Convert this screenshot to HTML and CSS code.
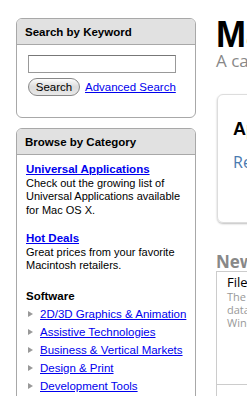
FILE: index.html
```html
<!DOCTYPE html>
<html lang="en">
<head>
    <meta charset="UTF-8">
    <meta name="viewport" content="width=device-width, initial-scale=1.0">
    <title>Macintosh Products Guide</title>
    <link rel="stylesheet" href="styles.css">
</head>
<body>
    <div id="page">
        <div id="sidebar">
            <div class="box">
                <div class="box-title">Search by Keyword</div>
                <div class="box-body search-body">
                    <input type="text" class="search-field">
                    <div class="search-row">
                        <button class="search-btn">Search</button>
                        <a href="#" class="adv-link">Advanced Search</a>
                    </div>
                </div>
            </div>

            <div class="box">
                <div class="box-title">Browse by Category</div>
                <div class="box-body cat-body">
                    <p class="feature">
                        <a href="#" class="feature-link">Universal Applications</a><br>
                        Check out the growing list of Universal Applications available for Mac OS X.
                    </p>
                    <p class="feature last">
                        <a href="#" class="feature-link">Hot Deals</a><br>
                        Great prices from your favorite Macintosh retailers.
                    </p>
                    <h4 class="cat-head">Software</h4>
                    <ul class="cat-list">
                        <li><a href="#">2D/3D Graphics &amp; Animation</a></li>
                        <li><a href="#">Assistive Technologies</a></li>
                        <li><a href="#">Business &amp; Vertical Markets</a></li>
                        <li><a href="#">Design &amp; Print</a></li>
                        <li><a href="#">Development Tools</a></li>
                        <li><a href="#">Education</a></li>
                    </ul>
                </div>
            </div>
        </div>

        <div id="main">
            <h1 class="page-title">Macintosh Products Guide</h1>
            <p class="page-sub">A catalog of hardware and software for the Mac</p>

            <div class="promo">
                <h2 class="promo-title">Apple Pro Applications</h2>
                <a href="#" class="promo-link">Read more about the pro apps</a>
            </div>

            <h3 class="news-head">New and Updated</h3>
            <div class="news-box">
                <div class="news-item">
                    <div class="news-title">FileMaker Pro 8.5</div>
                    <div class="news-text">The easiest way to<br>databases on Mac and<br>Windows networks.</div>
                </div>
                <div class="news-item"></div>
            </div>
        </div>
    </div>
</body>
</html>
```

FILE: styles.css
```css
html {
    overflow: hidden;
}
body {
    margin: 0;
    background-color: white;
    font-family: "Liberation Sans", Arial, sans-serif;
    font-size: 11px;
    color: #000;
}
#page {
    display: flex;
    gap: 20px;
    padding: 18px 0 0 16px;
}
#sidebar {
    width: 180px;
    flex-shrink: 0;
    display: flex;
    flex-direction: column;
    gap: 10px;
}
.box {
    border: 1px solid #a8a8a8;
    border-radius: 6px;
    overflow: hidden;
}
.box-title {
    background-color: #e1e1e1;
    border-bottom: 1px solid #a8a8a8;
    height: 25px;
    line-height: 26px;
    padding-left: 8px;
    font-weight: bold;
    font-size: 11.5px;
}
.box-body {
    padding: 10px 11px;
}
.search-body {
    height: 52px;
}
.search-field {
    display: block;
    box-sizing: border-box;
    width: 148px;
    height: 18px;
    margin: 0;
    border: 1px solid #999;
    border-top-color: #777;
    padding: 0 3px;
}
.search-row {
    display: flex;
    align-items: center;
    gap: 5px;
    margin-top: 5px;
}
.search-btn {
    box-sizing: border-box;
    width: 52px;
    height: 18px;
    padding: 0;
    border: 1px solid #888;
    border-radius: 9px;
    background: linear-gradient(#fdfdfd, #dcdcdc 50%, #e8e8e8);
    font-family: "Liberation Sans", Arial, sans-serif;
    font-size: 11.5px;
    color: #000;
}
a {
    color: #0000ee;
}
.adv-link {
    font-size: 11.5px;
}
.cat-body {
    padding: 8px 4px 10px 9px;
    line-height: 13.5px;
}
.feature {
    margin: 0 0 15px 0;
}
.feature.last {
    margin-bottom: 17px;
}
.feature-link {
    font-weight: bold;
    font-size: 11.5px;
}
.cat-head {
    margin: 0;
    font-size: 11.5px;
    line-height: 13px;
}
.cat-list {
    list-style: none;
    margin: 2px 0 0 0;
    padding: 0;
}
.cat-list li {
    position: relative;
    height: 18px;
    line-height: 18px;
    padding-left: 14px;
    white-space: nowrap;
    font-size: 11.5px;
}
.cat-list li::before {
    content: "";
    position: absolute;
    left: 2px;
    top: 6px;
    border-left: 5px solid #999;
    border-top: 3px solid transparent;
    border-bottom: 3px solid transparent;
}
#main {
    width: 500px;
    flex-shrink: 0;
    font-family: "Open Sans", "Liberation Sans", sans-serif;
    white-space: nowrap;
}
.page-title {
    margin: 0;
    font-family: "Liberation Sans", Arial, sans-serif;
    font-size: 36px;
    line-height: 36px;
    font-weight: bold;
    margin-top: -1px;
}
.page-sub {
    margin: -1px 0 0 0;
    font-size: 17px;
    line-height: 18px;
    color: #888;
}
.promo {
    margin-top: 24px;
    margin-left: 1px;
    height: 129px;
    border: 1px solid #ddd;
    border-radius: 6px;
    box-shadow: 0 1px 2px rgba(0,0,0,0.25);
    padding: 0 15px;
    box-sizing: border-box;
}
.promo-title {
    margin: 24px 0 0 0;
    font-family: "Liberation Sans", Arial, sans-serif;
    font-size: 18px;
    line-height: 20px;
}
.promo-link {
    display: block;
    margin-top: 12px;
    font-size: 16px;
    color: #4a7ab0;
    text-decoration: none;
}
.news-head {
    margin: 30px 0 0 0;
    font-size: 17px;
    line-height: 18px;
    color: #888;
    font-weight: bold;
}
.news-box {
    border-top: 1px solid #ccc;
    border-left: 1px solid #ccc;
}
.news-item {
    height: 108px;
    border-bottom: 1px solid #ccc;
    padding: 2px 10px;
}
.news-title {
    font-size: 13px;
    line-height: 16px;
}
.news-text {
    font-size: 11px;
    line-height: 13px;
    color: #999;
}
```
